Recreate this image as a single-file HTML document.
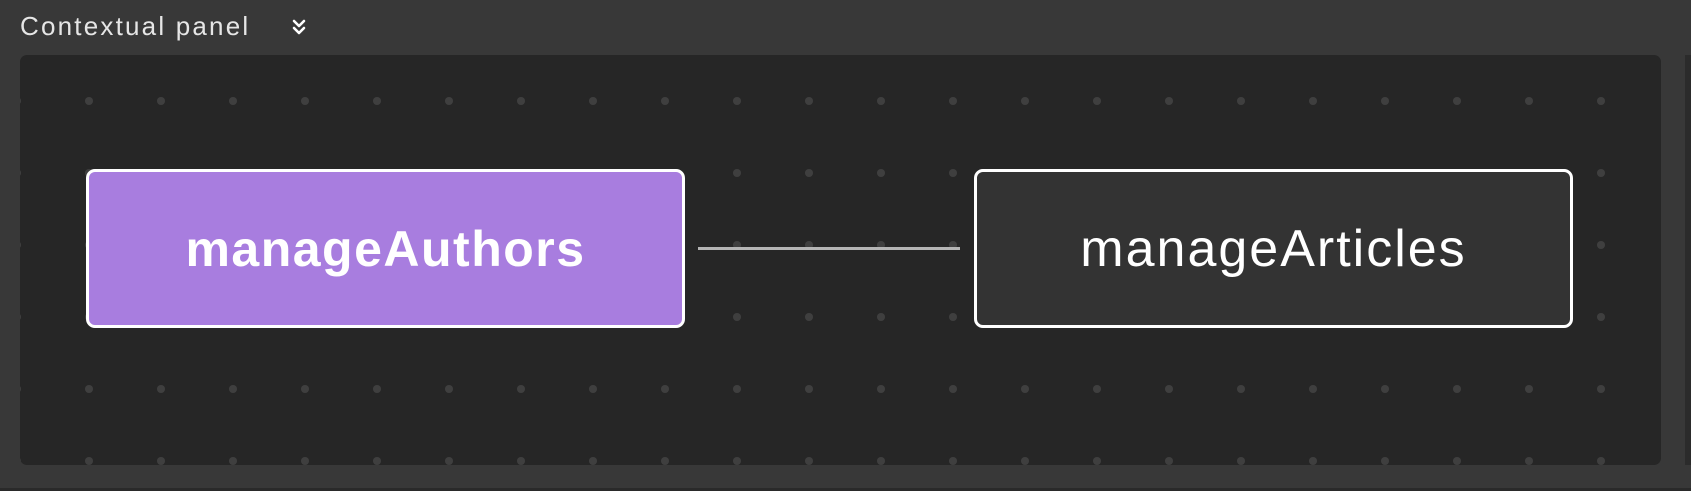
<!DOCTYPE html><html><head><style>
body{margin:0;width:1691px;height:491px;background:#383838;position:relative;overflow:hidden;font-family:"Liberation Sans",sans-serif}
.title{position:absolute;left:20px;top:11px;color:#e6e6e6;font-size:26px;letter-spacing:2.2px}
.canvas{position:absolute;left:20px;top:55px;width:1641px;height:410px;background:#262626;border-radius:7px;overflow:hidden}
.strip{position:absolute;left:1685px;top:55px;width:10px;height:410px;background:#2b2b2b}
.bot{position:absolute;left:0;top:488px;width:1691px;height:3px;background:#2a2a2a}
.node{position:absolute;box-sizing:border-box;border:3px solid #fff;border-radius:9px;display:flex;align-items:center;justify-content:center;font-size:50px;letter-spacing:1.5px}
</style></head><body>
<div class="title">Contextual panel</div>
<svg style="position:absolute;left:290px;top:18px" width="18" height="18" viewBox="0 0 18 18" fill="none" stroke="#fff" stroke-width="2.6" stroke-linecap="round" stroke-linejoin="round"><path d="M4 3l5 5 5-5M4 10l5 5 5-5"/></svg>
<div class="canvas">
<svg width="1641" height="410" style="position:absolute;left:0;top:0">
<defs><pattern id="p" x="33" y="10" width="72" height="72" patternUnits="userSpaceOnUse"><circle cx="36" cy="36" r="4" fill="#3f3f3f"/></pattern></defs>
<rect x="0" y="0" width="1641" height="410" fill="url(#p)"/>
</svg>
</div>
<div class="strip"></div>
<div class="bot"></div>
<div style="position:absolute;left:698px;top:247px;width:262px;height:3px;background:#b5b5b5"></div>
<div class="node" style="left:86px;top:169px;width:599px;height:159px;background:#a87ddf;color:#fff;font-weight:bold">manageAuthors</div>
<div class="node" style="left:974px;top:169px;width:599px;height:159px;background:#333;color:#fff;font-size:52px;letter-spacing:2px">manageArticles</div>
</body></html>
